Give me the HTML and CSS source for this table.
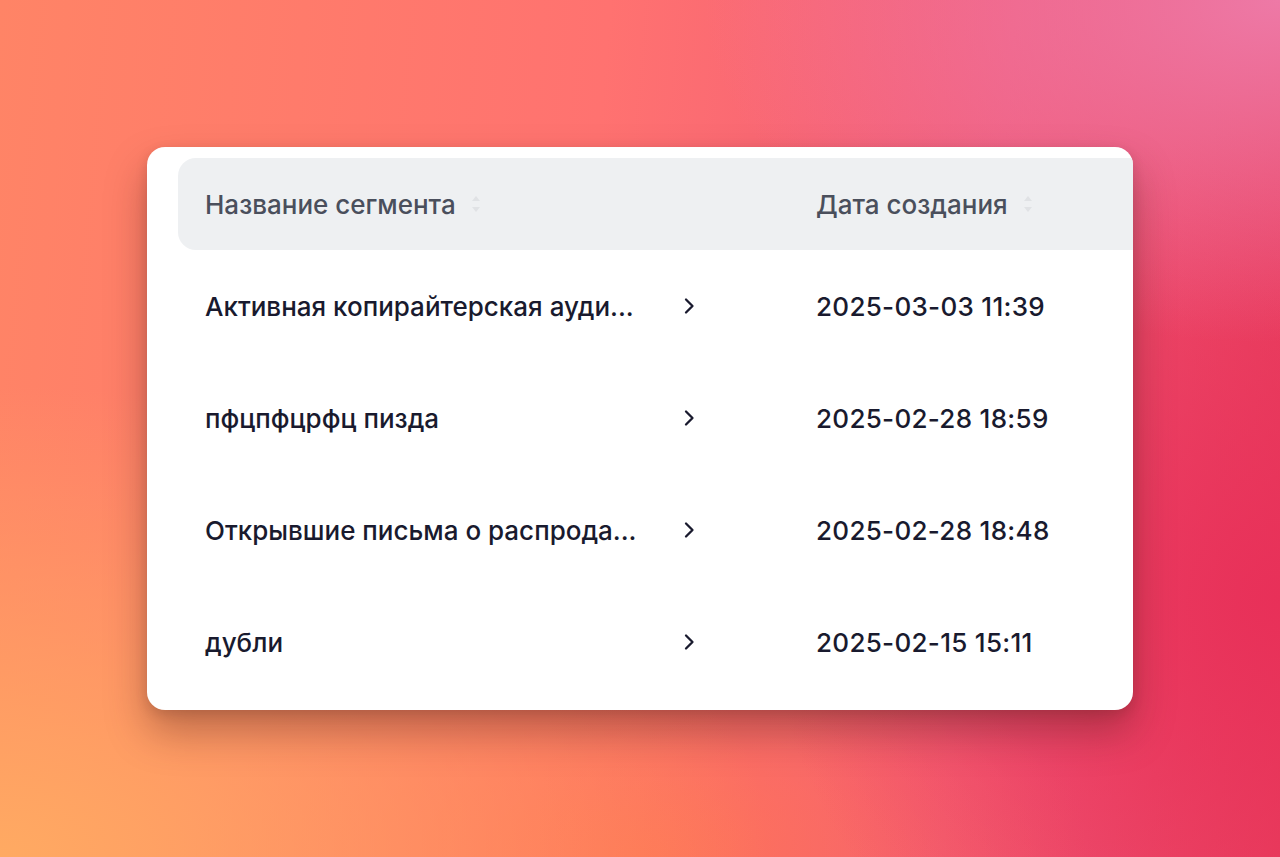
FILE: index.html
```html
<!DOCTYPE html>
<html lang="ru">
<head>
<meta charset="utf-8">
<title>Сегменты</title>
<link rel="stylesheet" href="styles.css">
</head>
<body>
<div class="stage">
  <div class="card">
    <div class="table">
      <div class="row head">
        <div class="cell name-cell">
          <span class="th">Название сегмента</span>
          <svg class="sort" viewBox="0 0 10 18" width="10" height="18"><path d="M5 1 L9 6 H1 Z"/><path d="M5 17 L9 12 H1 Z"/></svg>
        </div>
        <div class="cell chev-cell"></div>
        <div class="cell date-cell">
          <span class="th">Дата создания</span>
          <svg class="sort" viewBox="0 0 10 18" width="10" height="18"><path d="M5 1 L9 6 H1 Z"/><path d="M5 17 L9 12 H1 Z"/></svg>
        </div>
      </div>
      <div class="row">
        <div class="cell name-cell"><span class="name">Активная копирайтерская ауди...</span></div>
        <div class="cell chev-cell"><svg class="chev" viewBox="0 0 12 18" width="12" height="18"><path d="M3 2.5 L9.5 9 L3 15.5"/></svg></div>
        <div class="cell date-cell"><span class="date">2025-03-03 11:39</span></div>
      </div>
      <div class="row">
        <div class="cell name-cell"><span class="name">пфцпфцрфц пизда</span></div>
        <div class="cell chev-cell"><svg class="chev" viewBox="0 0 12 18" width="12" height="18"><path d="M3 2.5 L9.5 9 L3 15.5"/></svg></div>
        <div class="cell date-cell"><span class="date">2025-02-28 18:59</span></div>
      </div>
      <div class="row">
        <div class="cell name-cell"><span class="name">Открывшие письма о распрода...</span></div>
        <div class="cell chev-cell"><svg class="chev" viewBox="0 0 12 18" width="12" height="18"><path d="M3 2.5 L9.5 9 L3 15.5"/></svg></div>
        <div class="cell date-cell"><span class="date">2025-02-28 18:48</span></div>
      </div>
      <div class="row">
        <div class="cell name-cell"><span class="name">дубли</span></div>
        <div class="cell chev-cell"><svg class="chev" viewBox="0 0 12 18" width="12" height="18"><path d="M3 2.5 L9.5 9 L3 15.5"/></svg></div>
        <div class="cell date-cell"><span class="date">2025-02-15 15:11</span></div>
      </div>
    </div>
  </div>
</div>
</body>
</html>
```
FILE: styles.css
```css
* { box-sizing: border-box; }
html, body { margin: 0; height: 100%; }
body {
  font-family: Inter, "Noto Sans", sans-serif;
  background:
    radial-gradient(ellipse 45% 40% at 100% 0%, rgba(238, 124, 170, 0.95), rgba(238, 124, 170, 0) 100%),
    radial-gradient(ellipse 40% 55% at 100% 70%, rgba(232, 46, 88, 0.9), rgba(232, 46, 88, 0) 100%),
    radial-gradient(ellipse 60% 55% at 0% 100%, rgba(255, 170, 98, 1), rgba(255, 170, 98, 0) 100%),
    radial-gradient(ellipse 35% 30% at 50% 100%, rgba(255, 118, 80, 0.8), rgba(255, 118, 80, 0) 100%),
    linear-gradient(95deg, #ff8466 0%, #ff7270 45%, #f25a78 75%, #e8405e 100%);
}
.stage {
  height: 100%;
  display: flex;
  align-items: center;
  justify-content: center;
}
.card {
  width: 986px;
  height: 563px;
  background: #ffffff;
  border-radius: 18px;
  overflow: hidden;
  padding: 11px 0 12px 31px;
  box-shadow: 0 22px 40px rgba(70, 25, 20, 0.35), 0 4px 12px rgba(70, 25, 20, 0.15);
}
.table {
  width: 1000px;
}
.row {
  display: grid;
  grid-template-columns: 497px 141px 1fr;
  height: 112px;
  align-items: center;
}
.row.head {
  height: 92px;
  background: #eef0f2;
  border-radius: 18px 0 0 18px;
}
.cell {
  display: flex;
  align-items: center;
  min-width: 0;
}
.name-cell { padding-left: 27px; }
.th {
  font-size: 26px;
  font-weight: 500;
  color: #4a4f5c;
}
.sort {
  margin-left: 15px;
  fill: #e0e2e5;
}
.name {
  font-size: 26px;
  font-weight: 500;
  color: #191a2e;
  white-space: nowrap;
}
.chev-cell { padding-left: 8px; }
.chev {
  fill: none;
  stroke: #191a2e;
  stroke-width: 2.3;
  stroke-linecap: round;
  stroke-linejoin: round;
}
.date {
  font-size: 26px;
  font-weight: 500;
  color: #191a2e;
  letter-spacing: 0.3px;
}
```
